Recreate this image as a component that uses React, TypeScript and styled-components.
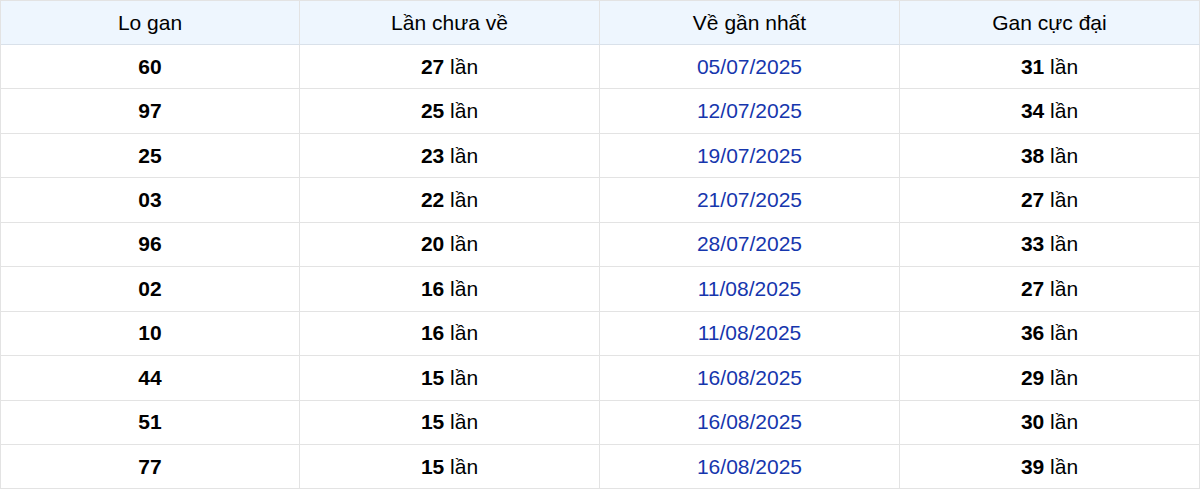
import React from "react";
import styled, { createGlobalStyle } from "styled-components";

const Global = createGlobalStyle`
  html, body { margin: 0; padding: 0; background: #fff; }
  body { font-family: "Liberation Sans", Arial, sans-serif; }
`;

const Table = styled.div`
  width: 1200px;
  box-sizing: border-box;
  border-top: 1px solid #e3e3e3;
  border-left: 1px solid #e3e3e3;
  font-family: "Liberation Sans", Arial, sans-serif;
  font-size: 21px;
`;

const Row = styled.div<{ $head?: boolean }>`
  display: grid;
  grid-template-columns: 299px 300px 300px 300px;
  height: ${(p) => (p.$head ? "44px" : "44.45px")};
  box-sizing: border-box;
  background: ${(p) => (p.$head ? "#eef6fe" : "#fff")};
  border-bottom: 1px solid ${(p) => (p.$head ? "#d9e1ea" : "#e3e3e3")};
`;

const Cell = styled.div<{ $head?: boolean }>`
  display: flex;
  align-items: center;
  justify-content: center;
  border-right: 1px solid #e3e3e3;
  color: #000;
  white-space: nowrap;
`;

const Num = styled.b`
  font-weight: 700;
  color: #000;
`;

const DateText = styled.span`
  color: #1636ad;
`;

const rows: [string, number, string, number][] = [
  ["60", 27, "05/07/2025", 31],
  ["97", 25, "12/07/2025", 34],
  ["25", 23, "19/07/2025", 38],
  ["03", 22, "21/07/2025", 27],
  ["96", 20, "28/07/2025", 33],
  ["02", 16, "11/08/2025", 27],
  ["10", 16, "11/08/2025", 36],
  ["44", 15, "16/08/2025", 29],
  ["51", 15, "16/08/2025", 30],
  ["77", 15, "16/08/2025", 39],
];

export default function App() {
  return (
    <>
      <Global />
      <Table>
        <Row $head>
          <Cell $head>Lo gan</Cell>
          <Cell $head>Lần chưa về</Cell>
          <Cell $head>Về gần nhất</Cell>
          <Cell $head>Gan cực đại</Cell>
        </Row>
        {rows.map(([lo, chua, date, max], i) => (
          <Row key={i}>
            <Cell>
              <Num>{lo}</Num>
            </Cell>
            <Cell>
              <Num>{chua}</Num>&nbsp;lần
            </Cell>
            <Cell>
              <DateText>{date}</DateText>
            </Cell>
            <Cell>
              <Num>{max}</Num>&nbsp;lần
            </Cell>
          </Row>
        ))}
      </Table>
    </>
  );
}
